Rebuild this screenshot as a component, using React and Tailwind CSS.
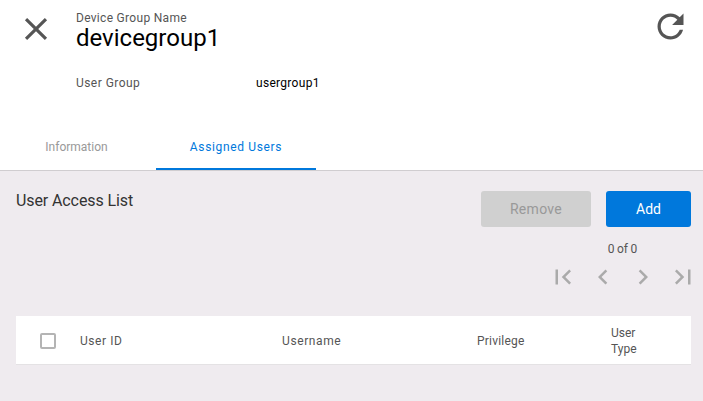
const Icon = ({ d, className }) => (
  <svg viewBox="0 0 24 24" className={className} fill="currentColor" aria-hidden="true">
    <path d={d} />
  </svg>
);

const CLOSE = "M19 6.41L17.59 5 12 10.59 6.41 5 5 6.41 10.59 12 5 17.59 6.41 19 12 13.41 17.59 19 19 17.59 13.41 12z";
const REFRESH = "M17.65 6.35C16.2 4.9 14.21 4 12 4c-4.42 0-7.99 3.58-7.99 8s3.57 8 7.99 8c3.73 0 6.84-2.55 7.73-6h-2.08c-.82 2.33-3.04 4-5.65 4-3.31 0-6-2.69-6-6s2.69-6 6-6c1.66 0 3.14.69 4.22 1.78L13 11h7V4l-2.35 2.35z";
const FIRST = "M18.41 16.59L13.82 12l4.59-4.59L17 6l-6 6 6 6zM6 6h2v12H6z";
const PREV = "M15.41 7.41L14 6l-6 6 6 6 1.41-1.41L10.83 12z";
const NEXT = "M10 6L8.59 7.41 13.17 12l-4.58 4.59L10 18l6-6z";
const LAST = "M5.59 7.41L10.18 12l-4.59 4.59L7 18l6-6-6-6zM16 6h2v12h-2z";

export default function App() {
  return (
    <div className="w-[703px] h-[401px] overflow-hidden bg-[#efebef] flex flex-col font-['Roboto',sans-serif]">
      <div className="h-[171px] bg-white border-b border-[#d0cdd0] flex flex-col shrink-0">
        <div className="h-[125px] flex">
          <div className="w-[72px] shrink-0 pl-[17px] pt-[10px]">
            <Icon d={CLOSE} className="w-[38px] h-[38px] text-[#555555]" />
          </div>
          <div className="w-[560px] pl-1 pt-[11px]">
            <div className="text-[12px] leading-[14px] tracking-[0.3px] text-[#555555]">Device Group Name</div>
            <div className="text-[24px] leading-[26px] text-black">devicegroup1</div>
            <div className="flex mt-[25px] text-[12px] leading-[14px]">
              <div className="w-[180px] tracking-[0.45px] text-[#555555]">User Group</div>
              <div className="tracking-[0.3px] text-black">usergroup1</div>
            </div>
          </div>
          <div className="pl-[19px] pt-[7px]">
            <Icon d={REFRESH} className="w-[39px] h-[39px] text-[#555555]" />
          </div>
        </div>
        <div className="flex flex-1 pl-[5px] text-[12px]">
          <div className="w-[143px] h-[45px] pt-[15px] text-center leading-[14px] text-[#999999]">Information</div>
          <div className="ml-[8px] w-[160px] h-[45px] pt-[15px] text-center leading-[14px] tracking-[0.65px] text-[#0078dc] border-b-2 border-[#0078dc]">Assigned Users</div>
        </div>
      </div>
      <div className="flex-1 px-[12px] pt-[20px]">
        <div className="flex justify-between">
          <div className="pl-1 text-[16px] leading-[19px] tracking-[-0.1px] text-[#333333]">User Access List</div>
          <div className="flex gap-[15px]">
            <div className="w-[110px] h-[36px] rounded-[3px] bg-[#d0d0d0] text-[#999999] text-[14px] tracking-[0.3px] flex items-center justify-center">Remove</div>
            <div className="w-[85px] h-[36px] rounded-[3px] bg-[#0078dc] text-white text-[14px] flex items-center justify-center">Add</div>
          </div>
        </div>
        <div className="mt-[15px] pr-[54px] text-right text-[12px] leading-[14px] tracking-[-0.2px] text-[#555555]">0 of 0</div>
        <div className="mt-[6px] -mr-[7px] flex justify-end gap-[10px] text-[#aaaaaa]">
          <Icon d={FIRST} className="w-[30px] h-[30px]" />
          <Icon d={PREV} className="w-[30px] h-[30px]" />
          <Icon d={NEXT} className="w-[30px] h-[30px]" />
          <Icon d={LAST} className="w-[30px] h-[30px]" />
        </div>
        <div className="mt-[24px] ml-1 h-[49px] pt-px bg-white border-b border-[#e4e2e4] flex items-center text-[12px] leading-[16px] text-[#555555]">
          <div className="w-[64px] pl-[24px] shrink-0">
            <div className="w-4 h-4 border-2 border-[#b4b4b4] rounded-[2px]" />
          </div>
          <div className="w-[202px] tracking-[0.55px]">User ID</div>
          <div className="w-[195px] tracking-[0.6px]">Username</div>
          <div className="w-[134px] tracking-[0.2px]">Privilege</div>
          <div className="w-[40px]">User Type</div>
        </div>
      </div>
    </div>
  );
}
